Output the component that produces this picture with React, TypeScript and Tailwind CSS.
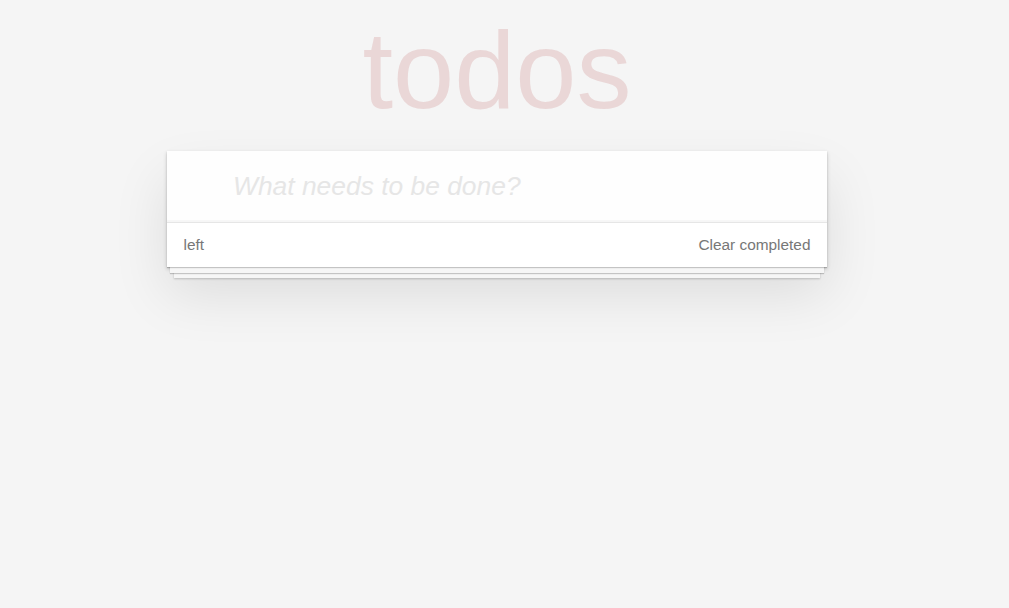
const App = () => {
  return (
    <div className="min-h-screen bg-[#f5f5f5] font-['Liberation_Sans',Arial,sans-serif] pr-[15px] flex justify-center">
      <div className="w-[660px] flex flex-col">
        <h1 className="mt-[15px] h-[110px] text-center text-[110px] leading-[110px] font-normal text-[rgba(175,47,47,0.15)]">
          todos
        </h1>
        <section className="mt-[26px] bg-white shadow-[0_1px_1px_rgba(0,0,0,0.2),0_9px_0_-3px_#f6f6f6,0_10px_1px_-3px_rgba(0,0,0,0.2),0_18px_0_-7px_#f6f6f6,0_19px_2px_-7px_rgba(0,0,0,0.2),0_2px_4px_rgba(0,0,0,0.2),0_27px_55px_rgba(0,0,0,0.1)]">
          <input
            className="block w-full pl-[66px] pr-[18px] py-[17px] text-[26.4px] leading-[37px] bg-[rgba(0,0,0,0.003)] shadow-[inset_0_-2px_1px_rgba(0,0,0,0.03)] outline-none text-[#4d4d4d] placeholder:italic placeholder:text-[#e6e6e6]"
            placeholder="What needs to be done?"
          />
          <footer className="flex justify-between items-center border-t border-[#e6e6e6] px-[16.5px] py-[11px] text-[15.4px] leading-[22px] text-[#777]">
            <span>left</span>
            <button className="text-[#777] cursor-pointer">Clear completed</button>
          </footer>
        </section>
      </div>
    </div>
  );
};

export default App;
